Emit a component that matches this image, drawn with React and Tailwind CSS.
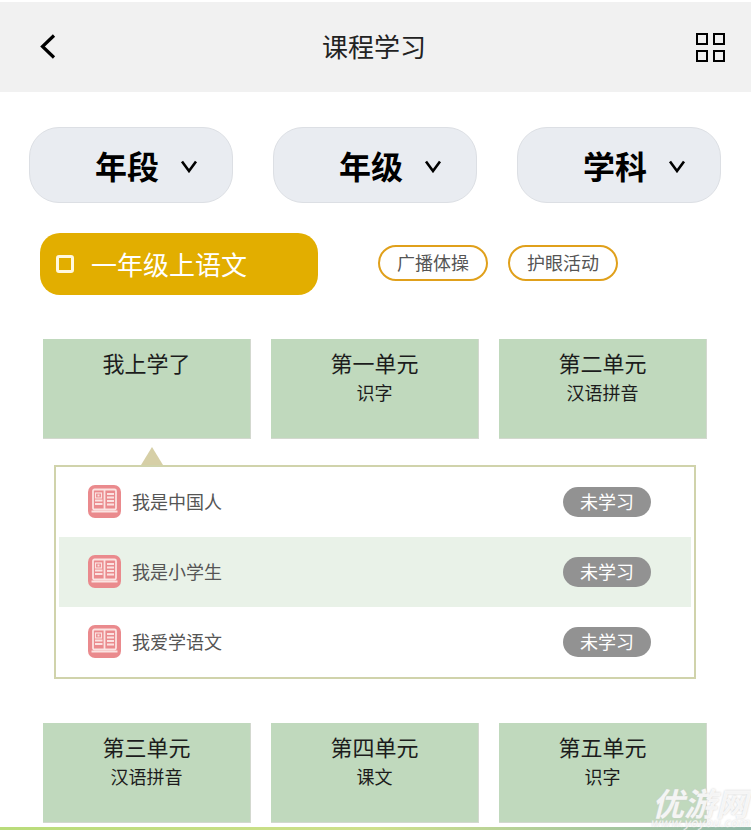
const font = "font-['Noto_Sans_CJK_SC','Liberation_Sans',sans-serif]";

const topUnits = [
  { title: "我上学了", sub: "" },
  { title: "第一单元", sub: "识字" },
  { title: "第二单元", sub: "汉语拼音" },
];

const bottomUnits = [
  { title: "第三单元", sub: "汉语拼音" },
  { title: "第四单元", sub: "课文" },
  { title: "第五单元", sub: "识字" },
];

const lessons = [
  { name: "我是中国人", active: false },
  { name: "我是小学生", active: true },
  { name: "我爱学语文", active: false },
];

function Pill({ label }) {
  return (
    <div className="flex h-[76px] w-[204px] items-center rounded-[30px] border border-[#dcdfe4] bg-[#e9ecf1] pl-[65px]">
      <span className="text-[32px] leading-none font-bold text-black">{label}</span>
      <svg className="ml-[21px] mt-[1px]" width="18" height="14" viewBox="0 0 18 14" fill="none">
        <path d="M2 2.5 L9 12 L16 2.5" stroke="#000" strokeWidth="2.6" />
      </svg>
    </div>
  );
}

function UnitRow({ units }) {
  return (
    <div className="ml-[43px] grid w-[664px] grid-cols-3 gap-x-[20px]">
      {units.map((u) => (
        <div key={u.title} className="flex h-[100px] flex-col items-center border-r border-b border-[#d3d8cf] bg-[#c0d9bd] pt-[7px] text-[#1c1c1c]">
          <div className="text-[22px] leading-[32px]">{u.title}</div>
          <div className="mt-[1px] text-[18px] leading-[26px]">{u.sub}</div>
        </div>
      ))}
    </div>
  );
}

function BookIcon() {
  return (
    <svg width="33" height="33" viewBox="0 0 33 33" fill="none">
      <rect width="33" height="33" rx="7" fill="#ea8a8d" />
      <rect x="5" y="4.5" width="23" height="20" rx="1.5" stroke="#fbe3e2" strokeWidth="1.8" />
      <path d="M16.5 5 V24 M3.5 26.5 H29.5 M7 15.5 H14.5 M7 19 H14.5 M19 9 H26 M19 12.5 H26 M19 16 H26 M19 19.5 H26" stroke="#fbe3e2" strokeWidth="1.8" />
      <rect x="7.5" y="8" width="6" height="5" stroke="#fbe3e2" strokeWidth="1.2" />
      <rect x="9.5" y="9.5" width="2" height="2" fill="#fbe3e2" />
    </svg>
  );
}

export default function App() {
  return (
    <div className={`relative h-[830px] w-[751px] overflow-hidden bg-white pt-[2px] ${font}`}>
      {/* header */}
      <div className="flex h-[90px] items-center justify-between bg-[#f1f1f1] pl-[39px] pr-[26px]">
        <svg width="18" height="28" viewBox="0 0 18 28" fill="none">
          <path d="M15 2.5 L3.5 13.5 L15 24.5" stroke="#000" strokeWidth="3.2" />
        </svg>
        <span className="mr-[5px] pb-[2px] text-[26px] leading-none text-[#222]">课程学习</span>
        <div className="grid grid-cols-2 gap-[5px]">
          <div className="h-[12px] w-[12px] border-2 border-black" />
          <div className="h-[12px] w-[12px] border-2 border-black" />
          <div className="h-[12px] w-[12px] border-2 border-black" />
          <div className="h-[12px] w-[12px] border-2 border-black" />
        </div>
      </div>

      {/* filters */}
      <div className="mt-[35px] ml-[29px] flex gap-x-[40px]">
        <Pill label="年段" />
        <Pill label="年级" />
        <Pill label="学科" />
      </div>

      {/* current course + tags */}
      <div className="mt-[30px] ml-[40px] flex items-center">
        <div className="flex h-[62px] w-[278px] items-center rounded-[20px] bg-[#e2ae00] pl-[16px] text-white">
          <div className="h-[18px] w-[18px] rounded-[3px] border-[3px] border-[#fff8e0]" />
          <span className="ml-[17px] text-[26px] leading-none">一年级上语文</span>
        </div>
        <div className="ml-[60px] mb-[2px] flex gap-x-[20px]">
          <div className="flex h-[36px] w-[110px] items-center justify-center rounded-full border-2 border-[#e0a01b] pb-[1px] text-[18px] text-[#555]">广播体操</div>
          <div className="flex h-[36px] w-[110px] items-center justify-center rounded-full border-2 border-[#e0a01b] pb-[1px] text-[18px] text-[#555]">护眼活动</div>
        </div>
      </div>

      <div className="mt-[44px]">
        <UnitRow units={topUnits} />
      </div>

      {/* lesson list */}
      <div className="relative mt-[26px] ml-[54px] h-[214px] w-[642px] border-2 border-[#d0d3ab] bg-white px-[3px]">
        <div className="absolute -top-[20px] left-[85px] h-0 w-0 border-x-[11px] border-b-[18px] border-x-transparent border-b-[#d6cfa6]" />
        {lessons.map((l) => (
          <div key={l.name} className={`flex h-[70px] items-center pl-[29px] pr-[40px] ${l.active ? "bg-[#e9f2e8]" : ""}`}>
            <div className="mb-[2px] flex items-center">
              <BookIcon />
              <span className="ml-[11px] text-[18px] text-[#555]">{l.name}</span>
            </div>
            <span className="ml-auto flex h-[30px] w-[88px] items-center justify-center rounded-full bg-[#929292] pb-[2px] text-[18px] text-white">未学习</span>
          </div>
        ))}
      </div>

      <div className="mt-[44px]">
        <UnitRow units={bottomUnits} />
      </div>

      <div className="mt-[4px] h-[3px] bg-gradient-to-r from-[#b9dc7a] via-[#cfe08c] to-[#8fb8a8]" />

      {/* watermark */}
      <div className="absolute bottom-[4px] right-[1px] flex w-[100px] flex-col items-center text-white/80 [text-shadow:0_0_2px_#c9c9c9]">
        <span className="h-[28px] text-[32px] leading-[28px] font-bold italic">优游网</span>
        <span className="mt-[2px] text-[12px] leading-[8px] italic tracking-[0.5px]">www.yoyou.com</span>
      </div>
    </div>
  );
}
